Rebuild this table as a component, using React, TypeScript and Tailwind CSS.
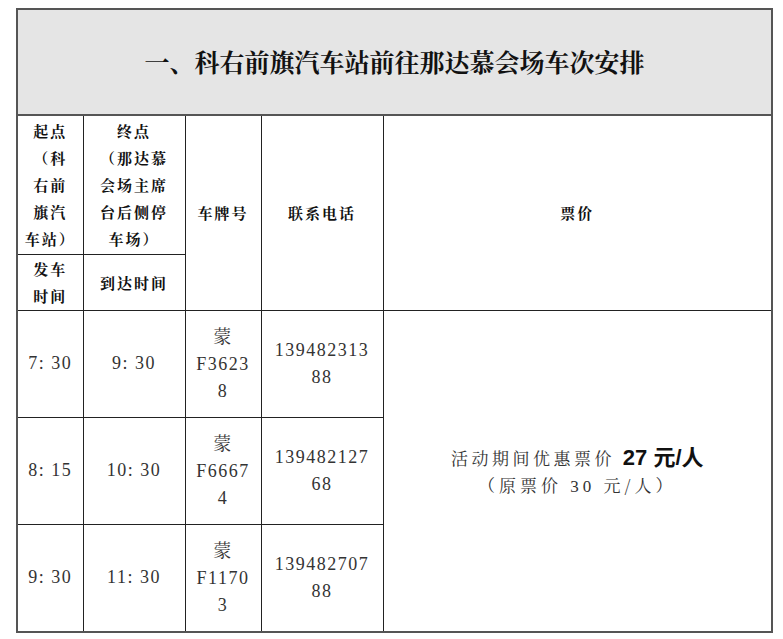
const serif = "font-['Liberation_Serif','Noto_Serif_CJK_SC','Noto_Sans_CJK_SC',serif]";
const cjk = "font-['Noto_Serif_CJK_SC','Noto_Sans_CJK_SC',sans-serif]";

type Trip = {
  depart: string;
  arrive: string;
  plate: [string, string];
  phone: [string, string];
};

const trips: Trip[] = [
  { depart: "7: 30", arrive: "9: 30", plate: ["F3623", "8"], phone: ["139482313", "88"] },
  { depart: "8: 15", arrive: "10: 30", plate: ["F6667", "4"], phone: ["139482127", "68"] },
  { depart: "9: 30", arrive: "11: 30", plate: ["F1170", "3"], phone: ["139482707", "88"] },
];

const cell = "border border-[#222] text-center align-middle p-0";
const head = `${cell} ${cjk} font-bold text-[15px] leading-[27px] tracking-[2px] text-[#111]`;
const data = `${cell} ${serif} text-[18px] leading-[27px] tracking-[1.5px] text-[#333]`;

export default function App() {
  return (
    <div className="min-h-[639px] w-[783px] bg-white pt-2 pl-4">
      <table className="table-fixed border-collapse border-2 border-[#555]">
        <colgroup>
          <col className="w-[66px]" />
          <col className="w-[102px]" />
          <col className="w-[76px]" />
          <col className="w-[122px]" />
          <col className="w-[389px]" />
        </colgroup>
        <tbody>
          <tr className="h-[106px]">
            <td
              colSpan={5}
              className={`border-2 border-[#555] bg-[#e5e5e5] text-center align-middle ${cjk} text-[25px] font-bold text-[#111]`}
            >
              一、科右前旗汽车站前往那达慕会场车次安排
            </td>
          </tr>
          <tr className="h-[139px]">
            <td className={head}>
              起点
              <br />
              （科
              <br />
              右前
              <br />
              旗汽
              <br />
              车站）
            </td>
            <td className={head}>
              终点
              <br />
              （那达慕
              <br />
              会场主席
              <br />
              台后侧停
              <br />
              车场）
            </td>
            <td rowSpan={2} className={head}>
              车牌号
            </td>
            <td rowSpan={2} className={head}>
              联系电话
            </td>
            <td rowSpan={2} className={head}>
              票价
            </td>
          </tr>
          <tr className="h-[56px]">
            <td className={head}>
              发车
              <br />
              时间
            </td>
            <td className={head}>到达时间</td>
          </tr>
          {trips.map((t, i) => (
            <tr key={t.depart} className={i === 2 ? "h-[108px]" : "h-[107px]"}>
              <td className={data}>{t.depart}</td>
              <td className={data}>{t.arrive}</td>
              <td className={data}>
                <span className={cjk}>蒙</span>
                <br />
                {t.plate[0]}
                <br />
                {t.plate[1]}
              </td>
              <td className={data}>
                {t.phone[0]}
                <br />
                {t.phone[1]}
              </td>
              {i === 0 && (
                <td rowSpan={3} className={`${cell} border-r-2 border-r-[#555] border-b-2 border-b-[#555] text-[#333]`}>
                  <div className="flex flex-col items-center pt-[2px]">
                    <div className={`${cjk} text-[17px] leading-[27px] tracking-[3.5px]`}>
                      活动期间优惠票价{" "}
                      <span className="font-['Liberation_Sans','Noto_Sans_CJK_SC',sans-serif] text-[22px] font-bold tracking-normal text-[#111]">
                        27 元/人
                      </span>
                    </div>
                    <div className={`${cjk} text-[17px] leading-[27px] tracking-[4px]`}>
                      （原票价 <span className={serif}>30</span> 元/人）
                    </div>
                  </div>
                </td>
              )}
            </tr>
          ))}
        </tbody>
      </table>
    </div>
  );
}
